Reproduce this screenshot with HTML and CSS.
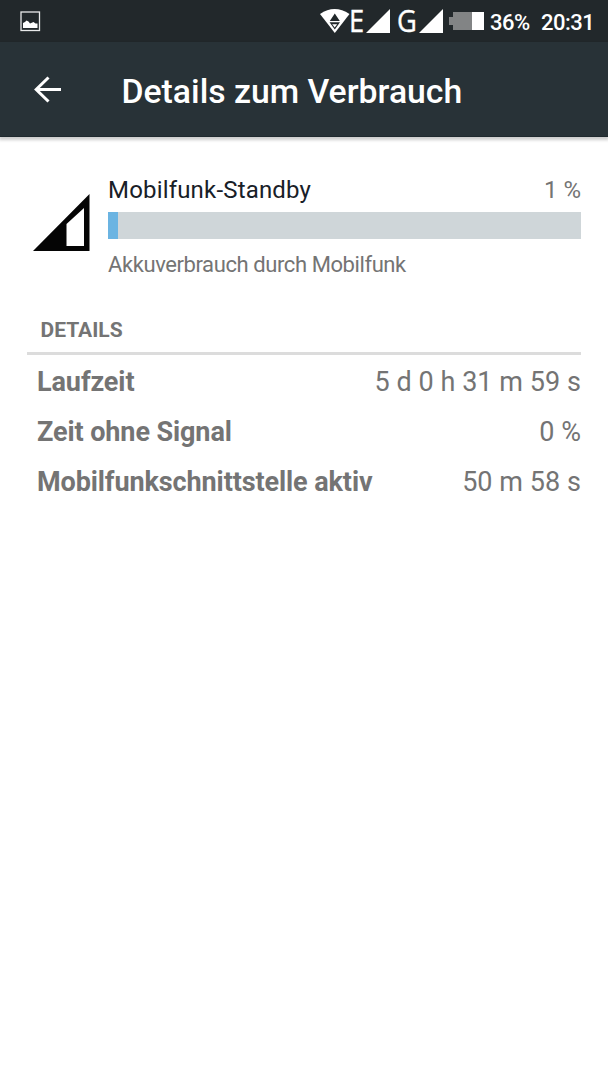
FILE: index.html
```html
<!DOCTYPE html>
<html lang="de">
<head>
<meta charset="utf-8">
<title>Details zum Verbrauch</title>
<link rel="stylesheet" href="styles.css">
</head>
<body>
<div class="status-bar">
  <svg class="icon-picture" width="21" height="21" viewBox="0 0 21 21"><rect x="1" y="1" width="18.5" height="18.5" fill="none" stroke="#e8e9ea" stroke-width="1.3"/><path d="M3 17V12l2-1 1.500-1.500 2 1L10 12.500l3.500-1.500 2 1.500h2V17z" fill="#fff"/></svg>
  <svg class="icon-wifi" width="30" height="25" viewBox="0 0 30 25"><path d="M0 5Q14.500-5 29.500 5L14.800 24z" fill="#fff"/><path d="M14.800 4.500l5 7.500h-10zM9.500 13.200h10.500l-5.200 7.300z" fill="#22282b"/><path d="M12.200 15.200h5l-2.500 3.200z" fill="#fff"/></svg>
  <span class="network network-e">E</span>
  <svg class="icon-signal" width="24" height="24" viewBox="0 0 24 24"><path d="M24 0v24H0z" fill="#fff"/></svg>
  <span class="network network-g">G</span>
  <svg class="icon-signal" width="24" height="24" viewBox="0 0 24 24"><path d="M24 0v24H0z" fill="#fff"/></svg>
  <svg class="icon-battery" width="35" height="18" viewBox="0 0 35 18"><path d="M4 0h19v18H4v-5H0V5h4z" fill="#828485"/><path d="M23 0h12v18H23z" fill="#fff"/></svg>
  <span class="status-text battery-level">36%</span>
  <span class="status-text clock">20:31</span>
</div>
<header class="app-bar">
  <svg class="icon-back" width="28" height="28" viewBox="0 0 28 28"><path d="M27 13.500H2.500M14.500 1.500L2.200 13.500 14.500 25.500" fill="none" stroke="#fff" stroke-width="3"/></svg>
  <h1 class="title">Details zum Verbrauch</h1>
</header>
<main class="content">
  <section class="summary">
    <svg class="icon-cell" width="58" height="58" viewBox="0 0 58 58"><path fill-rule="evenodd" d="M56.500 0V57H0zM33.500 30V52H51V14z" fill="#050505"/></svg>
    <div class="usage">
      <div class="usage-head"><span class="usage-name">Mobilfunk-Standby</span><span class="usage-percent">1 %</span></div>
      <div class="bar"><div class="bar-fill"></div></div>
      <p class="usage-note">Akkuverbrauch durch Mobilfunk</p>
    </div>
  </section>
  <h2 class="section-title">DETAILS</h2>
  <dl class="details">
    <div class="row"><dt>Laufzeit</dt><dd>5 d 0 h 31 m 59 s</dd></div>
    <div class="row"><dt>Zeit ohne Signal</dt><dd>0 %</dd></div>
    <div class="row"><dt>Mobilfunkschnittstelle aktiv</dt><dd>50 m 58 s</dd></div>
  </dl>
</main>
</body>
</html>
```
FILE: styles.css
```css
* { box-sizing: border-box; margin: 0; padding: 0; }
body {
  min-height: 1080px;
  background: #fff;
  font-family: Roboto, sans-serif;
  color: #747474;
}
svg { display: block; flex: none; }
span, h1, h2, dt, dd, p { white-space: nowrap; }
.status-bar {
  display: flex;
  align-items: flex-start;
  height: 42px;
  padding-left: 20px;
  background: #22282b;
  color: #fff;
}
.icon-picture { margin-top: 11px; }
.icon-wifi { margin: 9px 0 0 279px; }
.network { font: 31px/30px "Open Sans", sans-serif; margin-top: 5px; -webkit-text-stroke: .4px #fff; transform-origin: left; }
.network-e { width: 17px; margin-left: -1px; transform: scaleX(.88); }
.network-g { width: 22px; margin-left: 7px; transform: scaleX(.88); }
.icon-signal { margin-top: 9px; }
.icon-battery { margin: 12px 0 0 6px; }
.status-text { font-size: 22px; line-height: 26px; font-weight: 500; margin-top: 10px; letter-spacing: -.5px; }
.battery-level { width: 51px; margin-left: 6px; }
.app-bar {
  display: flex;
  height: 95px;
  padding-left: 34px;
  background: #283237;
  border-bottom: 1px solid #1f292e;
  box-shadow: 0 2px 3px 1px rgba(0, 0, 0, .2);
}
.icon-back { margin-top: 34px; }
.title {
  margin: 30px 0 0 59.500px;
  color: #fff;
  font-size: 33.75px;
  line-height: 40px;
  font-weight: 500;
}
.content { padding: 38px 27px 0; }
.summary { display: flex; padding-left: 6px; }
.icon-cell { margin: 19px 17px 0 0; }
.usage { flex: 1; }
.usage-head {
  display: flex;
  justify-content: space-between;
  height: 37px;
  font-size: 24px;
  line-height: 30px;
}
.usage-name { color: #182027; letter-spacing: .18px; }
.bar { height: 27px; background: #cfd6d9; }
.bar-fill { width: 10px; height: 100%; background: #6bb4e2; }
.usage-note { margin-top: 12px; font-size: 22px; line-height: 28px; letter-spacing: -.41px; }
.section-title {
  height: 40px;
  margin-top: 36px;
  padding-left: 13.500px;
  border-bottom: 3px solid #dcdcdc;
  font-size: 21px;
  line-height: 30px;
  font-weight: 700;
}
.details { padding: 2px 0 0 10px; font-size: 27px; }
.row { display: flex; justify-content: space-between; height: 49.800px; line-height: 50px; }
.row dt { font-weight: 700; letter-spacing: -.1px; }
.row dd { letter-spacing: .05px; }
```
